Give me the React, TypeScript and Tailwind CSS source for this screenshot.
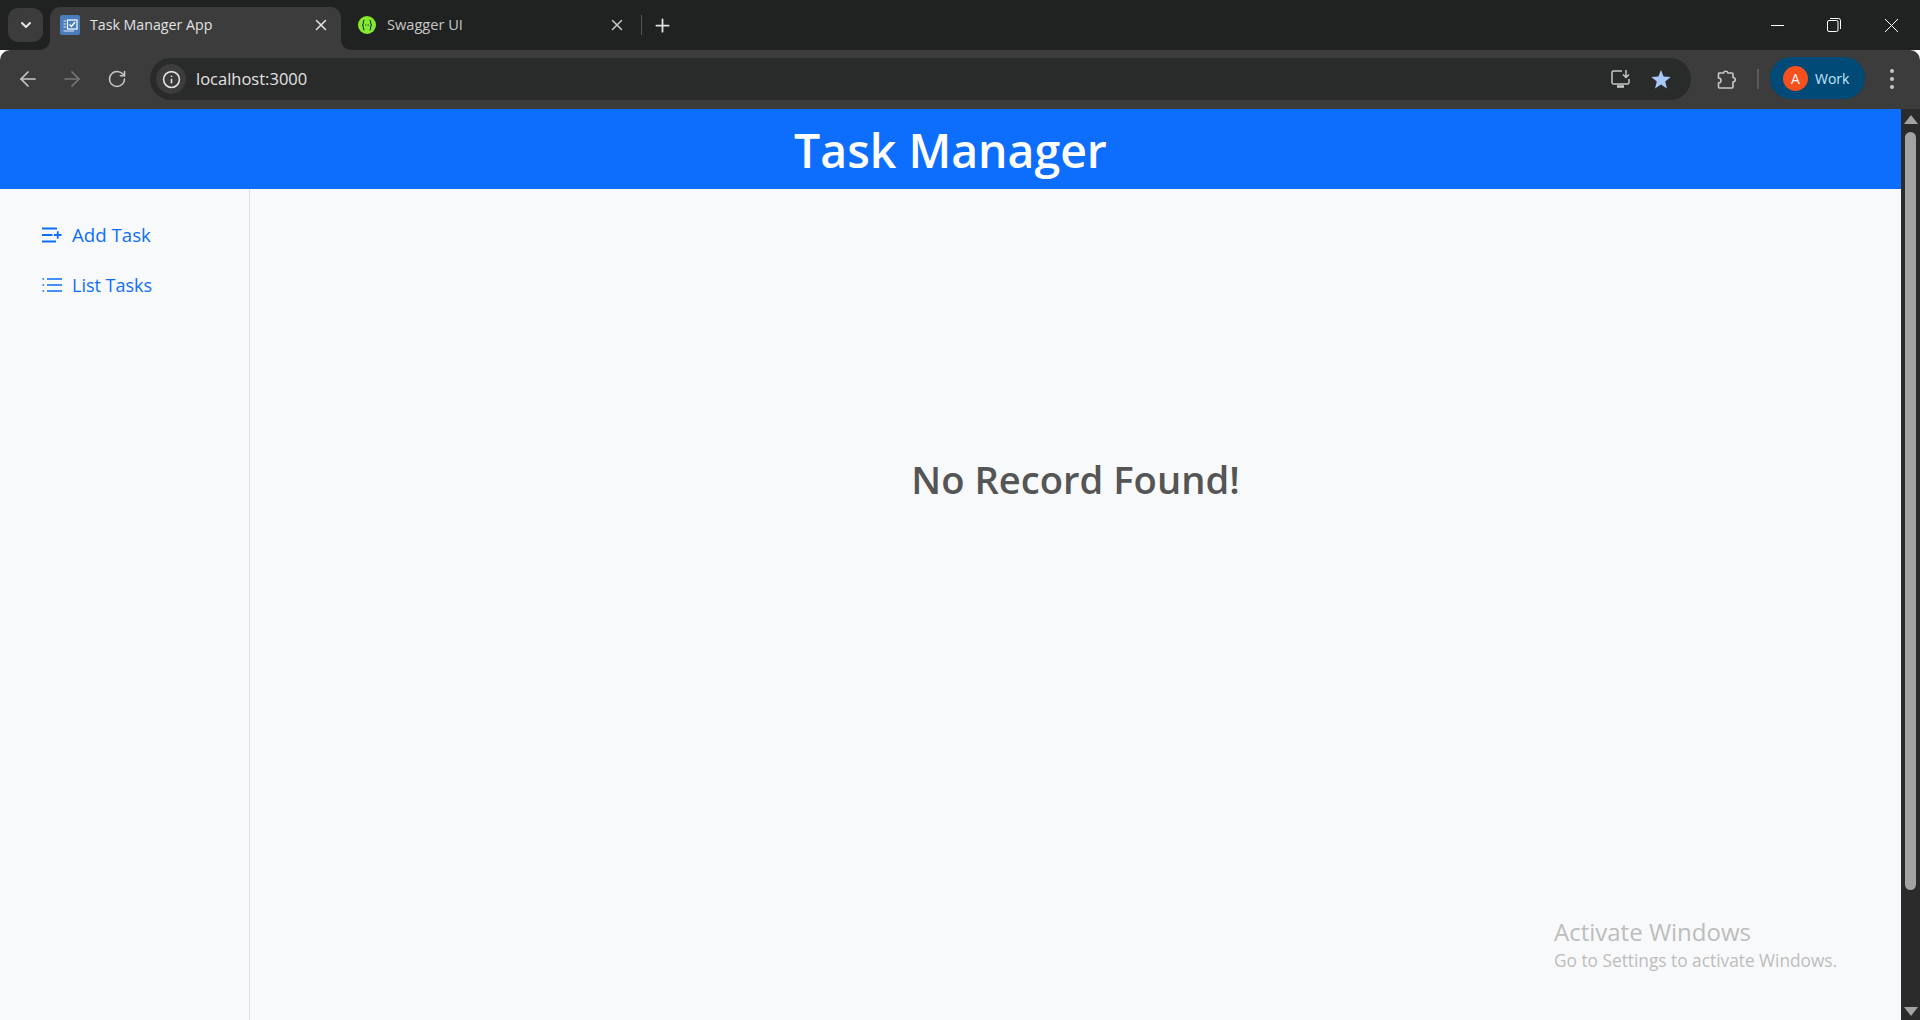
import { ArrowLeft, ArrowRight, ChevronDown, Info, Plus, RotateCw, X } from "lucide-react";

const ui = "font-['Open_Sans','Noto_Sans',sans-serif]";

const TaskIcon = () => (
  <svg viewBox="0 0 20 20" className="h-5 w-5 shrink-0">
    <rect width="20" height="20" rx="2" fill="#4a7ebb" />
    <path d="M3.500 6H6M3.500 9H6M3.500 12H6M3.500 16H14" stroke="#dfeaf5" strokeWidth="1.200" />
    <rect x="7.500" y="5" width="9.500" height="9" fill="none" stroke="#fff" strokeWidth="1.200" />
    <path d="M9.500 9.500l2 2 3.500-4.500" fill="none" stroke="#fff" strokeWidth="1.400" />
  </svg>
);

const SwaggerIcon = () => (
  <svg viewBox="0 0 18 18" className="h-[18px] w-[18px] shrink-0">
    <circle cx="9" cy="9" r="9" fill="#85ea2d" />
    <path d="M6.500 4C5 4 5.500 6 5.200 8c-.1.600-.7 1-1.200 1 .5 0 1.100.4 1.200 1 .3 2-.2 4 1.300 4M11.500 4c1.500 0 1 2 1.300 4 .1.600.7 1 1.200 1-.5 0-1.100.4-1.200 1-.3 2 .2 4-1.300 4" fill="none" stroke="#173647" strokeWidth="1.100" />
    <path d="M7.200 9h.8M8.700 9h.8M10.200 9h.8" stroke="#173647" strokeWidth="1.200" />
  </svg>
);

const InstallIcon = () => (
  <svg viewBox="0 0 20 18" className="h-[18px] w-5 shrink-0" fill="none" stroke="#c7c7c7" strokeWidth="1.500">
    <path d="M11 1H2.500A1.500 1.500 0 0 0 1 2.500v10A1.500 1.500 0 0 0 2.500 14h14a1.500 1.500 0 0 0 1.500-1.500V9" />
    <path d="M15 0v7M12 4.500l3 3 3-3" />
    <path d="M6 16.500h7" strokeWidth="2.600" />
  </svg>
);

const StarIcon = () => (
  <svg viewBox="0 0 20 20" className="h-5 w-5 shrink-0">
    <polygon points="10,1 12.600,7.600 19.700,8 14.200,12.500 16,19.400 10,15.600 4,19.400 5.800,12.500 .3,8 7.400,7.600" fill="#a8c7fa" />
  </svg>
);

const ExtensionIcon = () => (
  <svg viewBox="0 0 20 20" className="h-5 w-5 shrink-0" fill="none" stroke="#c7c7c7" strokeWidth="1.600">
    <path d="M3 4h4.500a2.300 2.300 0 0 1 4.500 0h4a1 1 0 0 1 1 1v3.500a2.200 2.200 0 0 1 0 4.500v5a1 1 0 0 1-1 1H3.500a1 1 0 0 1-1-1v-4a2.500 2.500 0 0 0 0-5V5a1 1 0 0 1 .5-1z" />
  </svg>
);

const DotsIcon = () => (
  <svg viewBox="0 0 20 20" className="h-5 w-5 shrink-0" fill="#c7c7c7">
    <circle cx="10" cy="2" r="2" />
    <circle cx="10" cy="10" r="2" />
    <circle cx="10" cy="18" r="2" />
  </svg>
);

const AddTaskIcon = () => (
  <svg viewBox="0 0 20 16" className="h-4 w-5 shrink-0" fill="none" stroke="#0d6efd" strokeWidth="1.800">
    <path d="M0 1.500h15M0 8h10.500M0 14.500h14M12 8h7.500M15.750 4.250v7.500" />
  </svg>
);

const ListTasksIcon = () => (
  <svg viewBox="0 0 20 16" className="h-4 w-5 shrink-0" fill="none" stroke="#0d6efd" strokeWidth="1.600">
    <path d="M5 2h15M5 8h15M5 14h15M.5 2h1.600M.5 8h1.600M.5 14h1.600" />
  </svg>
);

function BrowserChrome() {
  return (
    <div className={`${ui} shrink-0`}>
      <div className="flex h-[50px] bg-[#202221] pt-[7px] text-[14px] text-[#e3e3e3]">
        <div className="ml-[8px] mr-[7px] mt-[1px] flex h-[34px] w-[35px] items-center justify-center rounded-[10px] bg-[#3c3c3c]">
          <ChevronDown size={16} strokeWidth={3} className="text-[#e3e3e3]" />
        </div>
        <div className="relative flex h-[43px] w-[291px] items-center rounded-t-[10px] bg-[#3c3c3c] pb-[7px] pl-[10px] pr-[11px]">
          <TaskIcon />
          <span className="ml-[10px] flex-1 text-[14.200px]">Task Manager App</span>
          <X size={18} strokeWidth={2} />
          <div className="absolute bottom-0 left-[-10px] h-[10px] w-[10px] bg-[#3c3c3c]">
            <div className="h-full w-full rounded-br-[10px] bg-[#202221]" />
          </div>
          <div className="absolute bottom-0 right-[-10px] h-[10px] w-[10px] bg-[#3c3c3c]">
            <div className="h-full w-full rounded-bl-[10px] bg-[#202221]" />
          </div>
        </div>
        <div className="flex h-[36px] w-[300px] items-center pl-[17px] pr-[15px]">
          <SwaggerIcon />
          <span className="ml-[11px] flex-1 text-[14.600px] text-[#c7c7c7]">Swagger UI</span>
          <X size={18} strokeWidth={2} className="text-[#c7c7c7]" />
        </div>
        <div className="mt-[8px] h-[20px] w-px bg-[#555]" />
        <div className="ml-[10px] flex h-[36px] items-center">
          <Plus size={21} strokeWidth={2} />
        </div>
        <div className="ml-auto flex h-[36px] items-center pr-[22px] text-white">
          <div className="h-px w-[13px] bg-white" />
          <svg viewBox="0 0 14 14" className="ml-[43px] h-[14px] w-[14px]" fill="none" stroke="#fff" strokeWidth="1">
            <rect x="0.500" y="2.500" width="10.500" height="11" rx="1.500" />
            <path d="M3 .5h8.500A2 2 0 0 1 13.500 2.500V11" />
          </svg>
          <svg viewBox="0 0 13 13" className="ml-[44px] h-[13px] w-[13px]" fill="none" stroke="#fff" strokeWidth="1">
            <path d="M0 0l13 13M13 0L0 13" />
          </svg>
        </div>
      </div>
      <div className="flex h-[59px] items-start rounded-t-[10px] bg-[#3c3c3c] pt-[8px]">
        <div className="flex h-[42px] items-center pl-[16px] text-[#c7c7c7]">
          <ArrowLeft size={24} strokeWidth={1.700} />
          <ArrowRight size={24} strokeWidth={1.700} className="ml-[20px] text-[#777]" />
          <RotateCw size={20} strokeWidth={1.900} className="ml-[23px]" />
        </div>
        <div className="ml-[23px] flex h-[42px] flex-1 items-center rounded-full bg-[#292a2a] pl-[6px]">
          <div className="flex h-[30px] w-[30px] items-center justify-center rounded-full bg-[#3c3c3c]">
            <Info size={19} className="text-[#e3e3e3]" />
          </div>
          <span className="ml-[10px] text-[16.500px] text-[#e3e3e3]">localhost:3000</span>
          <div className="ml-auto flex items-center pr-[20px]">
            <InstallIcon />
            <div className="ml-[20px]">
              <StarIcon />
            </div>
          </div>
        </div>
        <div className="flex h-[42px] items-center pr-[18px]">
          <div className="ml-[25px]">
            <ExtensionIcon />
          </div>
          <div className="ml-[21px] h-[20px] w-[2px] bg-[#5a5a5a]" />
          <div className="ml-[11px] -mt-[2px] flex h-[42px] w-[95px] items-center rounded-full bg-[#004a77] pl-[13px]">
            <div className="flex h-[25px] w-[25px] items-center justify-center rounded-full bg-[#f4511e] text-[14px] text-white">A</div>
            <span className="ml-[7px] text-[14px] text-[#c2e7ff]">Work</span>
          </div>
          <div className="ml-[17px]">
            <DotsIcon />
          </div>
        </div>
      </div>
    </div>
  );
}

function Scrollbar() {
  return (
    <div className="flex w-[19px] shrink-0 flex-col items-center bg-[#2b2b2b]">
      <div className="mt-[6px] h-0 w-0 border-x-[7px] border-b-[9px] border-x-transparent border-b-[#a3a3a3]" />
      <div className="mt-[8px] h-[758px] w-[11px] rounded-full bg-[#a3a3a3]" />
      <div className="mt-auto mb-[4px] h-0 w-0 border-x-[7px] border-t-[9px] border-x-transparent border-t-[#a3a3a3]" />
    </div>
  );
}

export default function App() {
  return (
    <div className={`${ui} flex h-[1020px] w-[1920px] flex-col overflow-hidden`}>
      <BrowserChrome />
      <div className="flex min-h-0 flex-1">
        <div className="relative flex min-w-0 flex-1 flex-col bg-[#f8f9fa]">
          <header className="flex h-[80px] shrink-0 items-center justify-center bg-[#0d6efd] pt-[4px] text-[46.400px] font-semibold text-white">
            Task Manager
          </header>
          <div className="flex min-h-0 flex-1">
            <nav className="w-[250px] shrink-0 border-r border-[#dee2e6] pl-[42px] pt-[34px] text-[18px] text-[#0d6efd]">
              <a href="#" className="flex h-[24px] items-center">
                <AddTaskIcon />
                <span className="ml-[10px] text-[18.700px]">Add Task</span>
              </a>
              <a href="#" className="mt-[26px] flex h-[24px] items-center">
                <ListTasksIcon />
                <span className="ml-[10px]">List Tasks</span>
              </a>
            </nav>
            <main className="flex-1 pt-[262px] text-center text-[38.200px] font-semibold text-[#555]">
              No Record Found!
            </main>
          </div>
          <div className="absolute left-[1554px] top-[807px] text-[#bdbdbd]">
            <div className="text-[24px] leading-[32px]">Activate Windows</div>
            <div className="text-[17.300px] leading-[25px]">Go to Settings to activate Windows.</div>
          </div>
        </div>
        <Scrollbar />
      </div>
    </div>
  );
}
